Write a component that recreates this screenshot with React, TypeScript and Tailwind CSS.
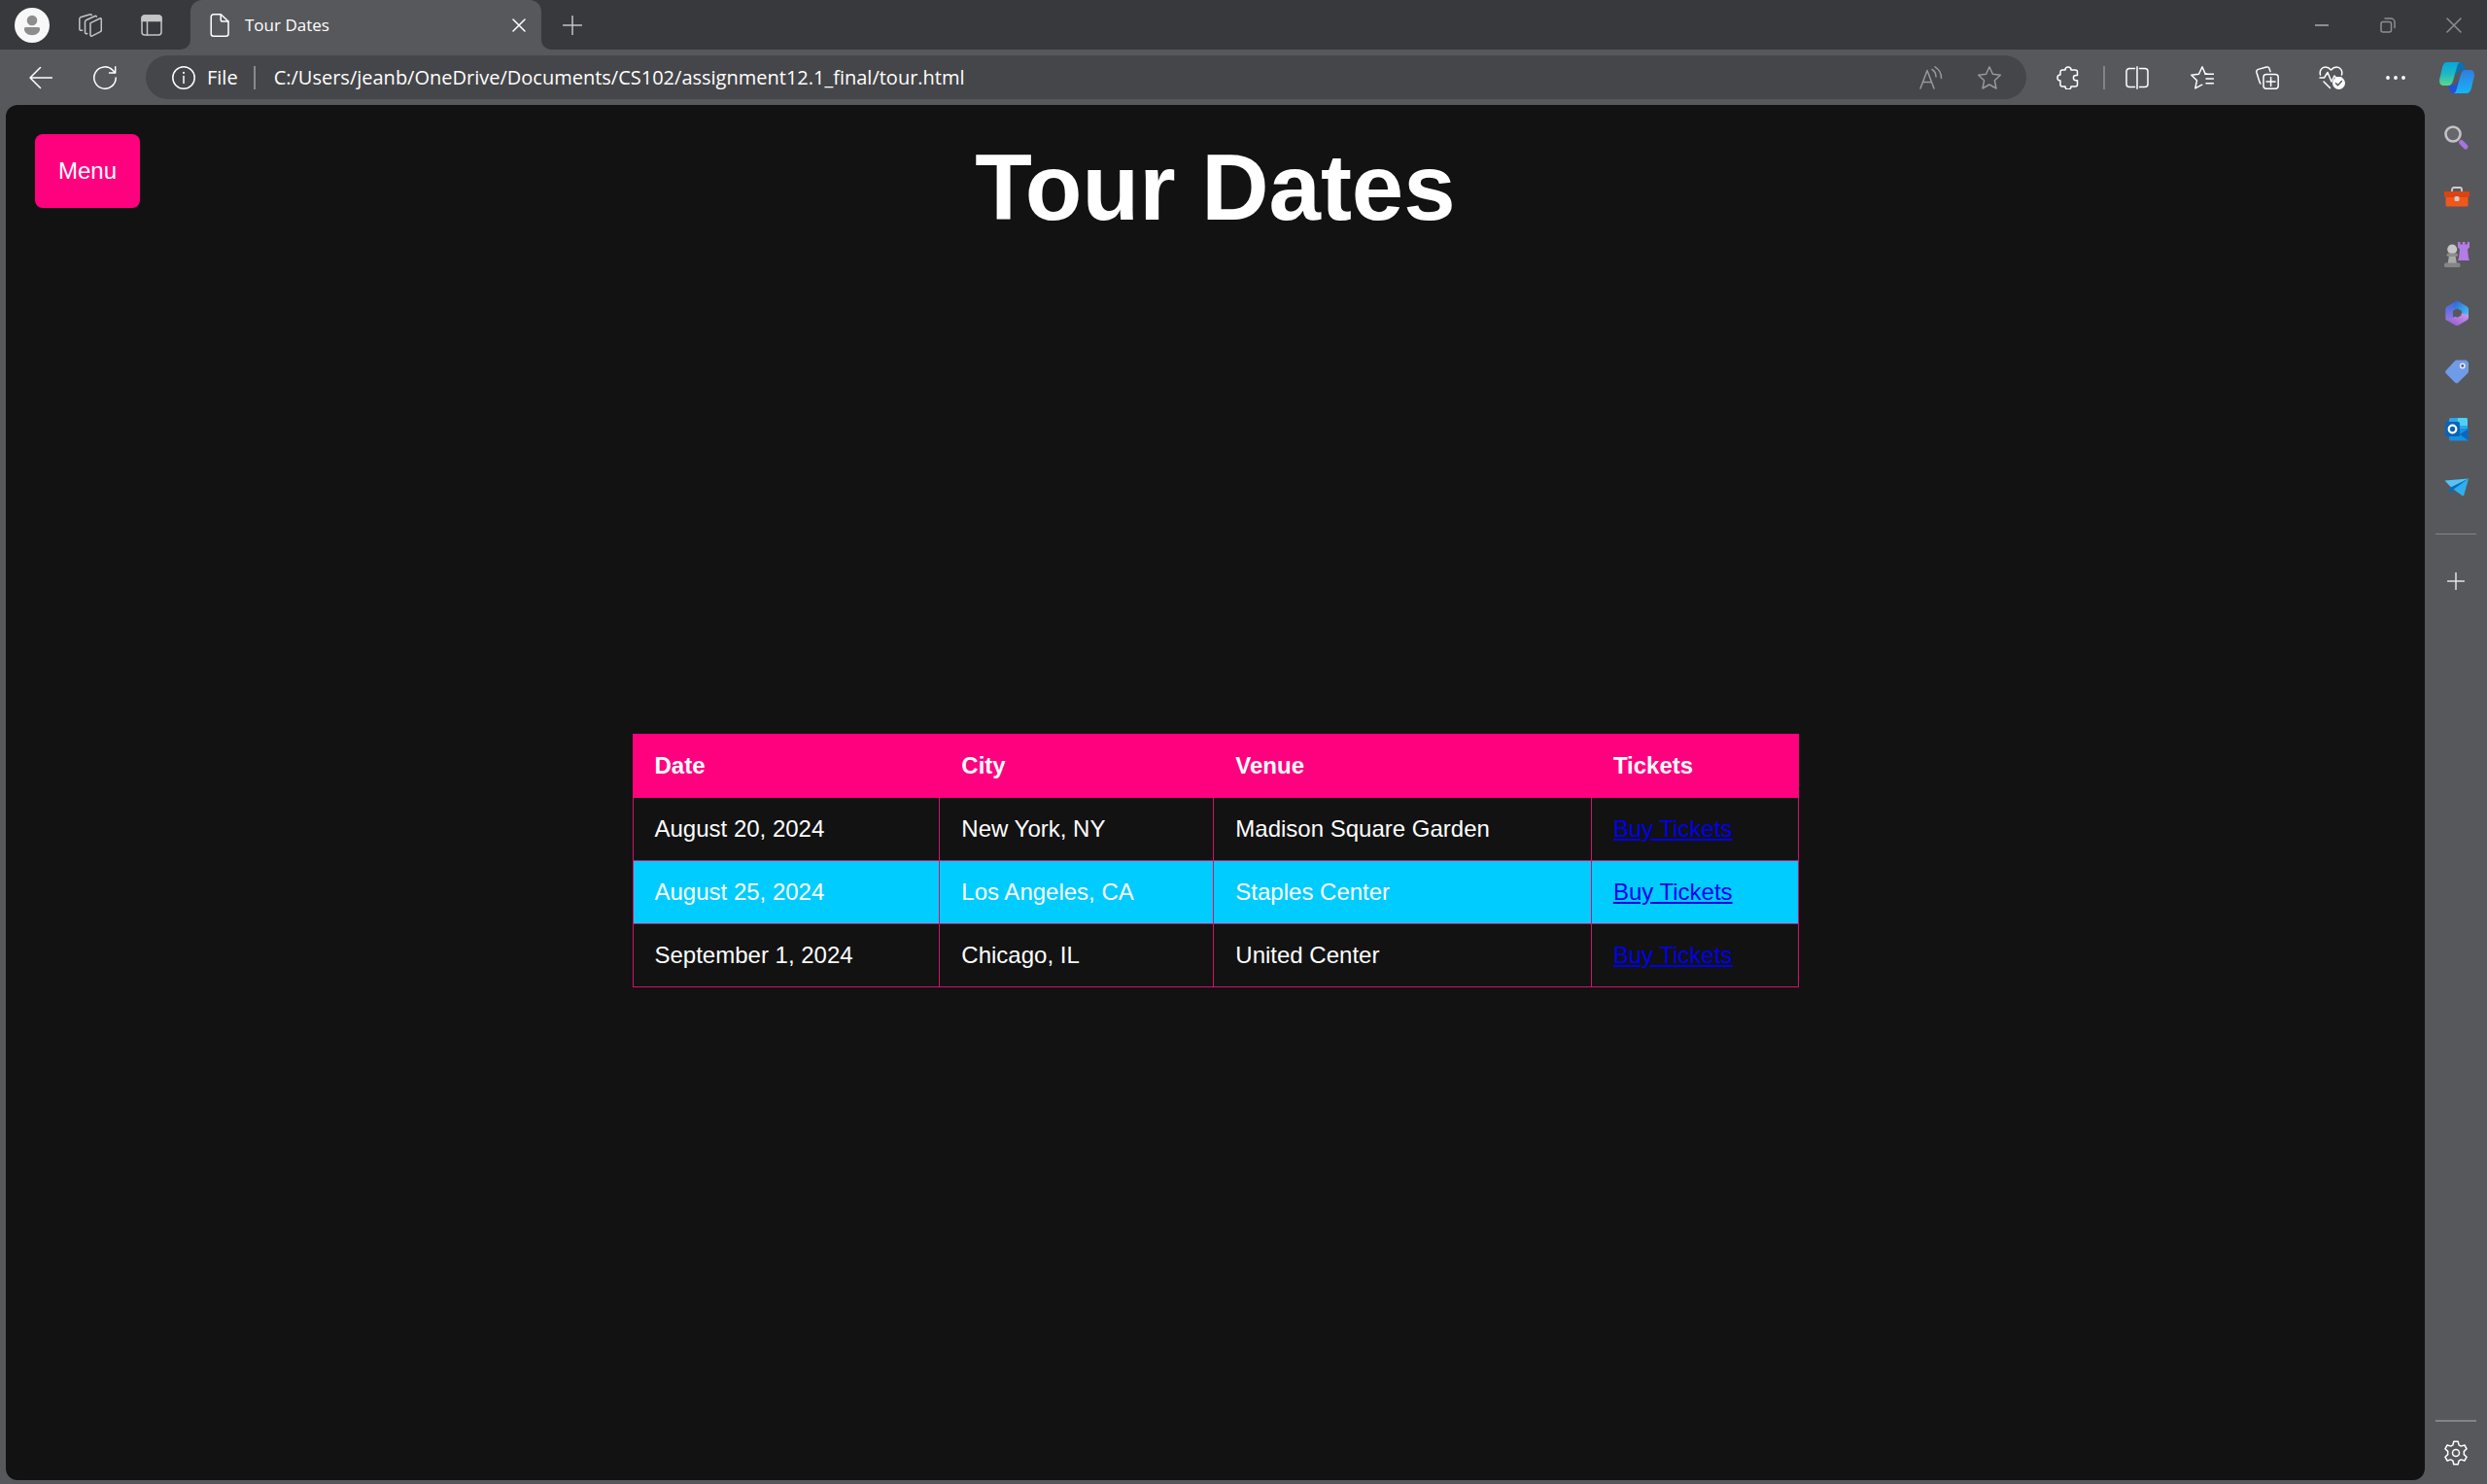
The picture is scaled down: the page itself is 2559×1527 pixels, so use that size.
import React from "react";

type IconProps = { children: React.ReactNode; className?: string; box?: string };

function Icon({ children, className = "size-6", box = "0 0 24 24" }: IconProps) {
  return (
    <svg
      viewBox={box}
      className={`shrink-0 ${className}`}
      fill="none"
      stroke="currentColor"
      strokeWidth="1.5"
      strokeLinecap="round"
      strokeLinejoin="round"
      aria-hidden="true"
    >
      {children}
    </svg>
  );
}

function IconButton({ label, className, children }: { label: string; className: string; children: React.ReactNode }) {
  return (
    <button type="button" aria-label={label} className={`flex shrink-0 items-center justify-center ${className}`}>
      {children}
    </button>
  );
}

function TabStrip() {
  return (
    <header className="flex h-[51px] shrink-0 bg-[#38393d] text-[#c4c4c7]">
      <IconButton label="Profile" className="w-[66px]">
        <svg viewBox="0 0 36 36" className="size-9" aria-hidden="true">
          <circle cx="18" cy="18" r="18" fill="#f8f8f8" />
          <circle cx="18" cy="13" r="5.3" fill="#8d8d8d" />
          <path d="M11.5 20h13a1.6 1.6 0 0 1 1.6 1.600c0 4-3.600 6.700-8.100 6.700s-8.100-2.700-8.100-6.700a1.600 1.600 0 0 1 1.600-1.600Z" fill="#8d8d8d" />
        </svg>
      </IconButton>
      <IconButton label="Workspaces" className="w-[54px]">
        <Icon>
          <path d="M12.200 9.600 21.800 5a1 1 0 0 1 1.500.9v11.200c0 .7-.4 1.300-1 1.600l-8.800 4.400a1 1 0 0 1-1.500-.9V11.300c0-.7-.3-1.400.2-1.700Z" />
          <path d="M8.800 20.500c-1.300.4-2.300 0-2.300-1.100V8.400c0-.7.4-1.300 1-1.600l9.300-4.300c.6-.3 1.400 0 1.500.7" />
          <path d="M3.600 17.200C2 17.600.8 17.200.8 16.100V5.400c0-.7.4-1.300 1-1.600L11 1c.8-.3 1.800-.2 2.300.4" />
        </Icon>
      </IconButton>
      <IconButton label="Tab actions" className="w-[72px]">
        <Icon className="size-[22px]" box="0 0 22 22">
          <rect x="1" y="1" width="20" height="20" rx="3" />
          <path d="M1 6.500V4a3 3 0 0 1 3-3h14a3 3 0 0 1 3 3v2.500Z" fill="currentColor" />
          <path d="M6.500 7v14" />
        </Icon>
      </IconButton>
      <div className="relative ml-1 flex w-[361px] items-center rounded-t-xl bg-[#57585c] pr-4 pl-5 text-white">
        <svg viewBox="0 0 10 10" className="absolute bottom-0 -left-2.5 size-2.5" aria-hidden="true">
          <path d="M10 0v10H0A10 10 0 0 0 10 0Z" fill="#57585c" />
        </svg>
        <svg viewBox="0 0 10 10" className="absolute -right-2.5 bottom-0 size-2.5" aria-hidden="true">
          <path d="M0 0v10h10A10 10 0 0 1 0 0Z" fill="#57585c" />
        </svg>
        <Icon className="h-6 w-5" box="0 0 20 24">
          <path d="M3.700.8h7.500L19 8v12.700a2.500 2.500 0 0 1-2.500 2.500H3.700a2.500 2.500 0 0 1-2.500-2.500V3.300A2.500 2.500 0 0 1 3.700.8Z" />
          <path d="M11.200 1v5.200A1.800 1.800 0 0 0 13 8h5.800" />
        </Icon>
        <span className="ml-4 flex-1 font-['Open_Sans',sans-serif] text-[17px] leading-6">Tour Dates</span>
        <IconButton label="Close tab" className="">
          <Icon className="size-3.5" box="0 0 14 14">
            <path d="m1 1 12 12M13 1 1 13" />
          </Icon>
        </IconButton>
      </div>
      <IconButton label="New tab" className="w-16">
        <Icon className="size-5" box="0 0 20 20">
          <path d="M10 .5v19M.5 10h19" />
        </Icon>
      </IconButton>
      <div className="ml-auto flex text-[#8e8e91]">
        <IconButton label="Minimize" className="w-[68px]">
          <Icon className="size-4" box="0 0 16 16">
            <path d="M1 8h14" strokeWidth="2" strokeLinecap="butt" />
          </Icon>
        </IconButton>
        <IconButton label="Restore" className="w-[68px]">
          <Icon className="size-4" box="0 0 16 16">
            <rect x="1" y="4.500" width="10.500" height="10.500" rx="2" />
            <path d="M5 1h6a4 4 0 0 1 4 4v5.500" />
          </Icon>
        </IconButton>
        <IconButton label="Close" className="w-[68px]">
          <Icon className="size-4" box="0 0 16 16">
            <path d="m1 1 14 14M15 1 1 15" />
          </Icon>
        </IconButton>
      </div>
    </header>
  );
}

function CopilotLogo() {
  return (
    <svg viewBox="0 0 36 32" className="h-8 w-9" aria-hidden="true">
      <defs>
        <linearGradient id="cp-left" x1="0" y1="0" x2="0" y2="1">
          <stop offset="0" stopColor="#0aa5dc" />
          <stop offset="0.5" stopColor="#1db8c4" />
          <stop offset="1" stopColor="#5bd98b" />
        </linearGradient>
        <linearGradient id="cp-right" x1="0" y1="0" x2="0" y2="1">
          <stop offset="0" stopColor="#2f7de0" />
          <stop offset="1" stopColor="#18b4f5" />
        </linearGradient>
      </defs>
      <path d="M20 0c4 0 5 2 6 5l1 3.500h-4c-3 0-4 2-5 5L14 8l2-8Z" fill="#0e6fb0" />
      <path d="M16 32c-4 0-5-2-6-5l-1-3.500h4c3 0 4-2 5-5l5 5.500-3 8Z" fill="#2350d8" />
      <path d="M8 0h14c-2 0-3 1.500-3.800 4.500l-4 14C13.200 22 12 24 9 24H4.500C.8 24-.5 21 .3 17L3 5.500C4 1.500 5.500 0 8 0Z" fill="url(#cp-left)" />
      <path d="M28 32H14c2 0 3-1.500 3.800-4.500l4-14C22.800 10 24 8 27 8h4.500c3.700 0 5 3 4.200 7L33 26.500c-1 4-2.500 5.500-5 5.500Z" fill="url(#cp-right)" />
      <path d="m19.500 10.500-4.500 13h2.500l4-12.500Z" fill="#57585c" />
    </svg>
  );
}

function Toolbar() {
  return (
    <nav aria-label="Browser toolbar" className="flex h-[57px] shrink-0 items-center text-white">
      <IconButton label="Back" className="ml-2 h-12 w-[68px]">
        <Icon>
          <path d="M23.500 12H1M11.500 1.500 1 12l10.500 10.500" />
        </Icon>
      </IconButton>
      <IconButton label="Refresh" className="h-12 w-16">
        <Icon>
          <path d="M23.200 12A11.200 11.200 0 1 1 20 4.200L22.500 7M22.700.8V7h-6.200" />
        </Icon>
      </IconButton>
      <div className="ml-2.5 flex h-[45px] flex-1 items-center rounded-full bg-[#454649] pl-[27px] font-['Open_Sans',sans-serif] text-[20px]">
        <Icon>
          <circle cx="12" cy="12" r="11.200" />
          <path d="M12 10.500v7" />
          <path d="M12 6.800v.2" strokeWidth="2" />
        </Icon>
        <label htmlFor="address" className="ml-3 leading-7">
          File
        </label>
        <span className="ml-4 h-6 w-0.5 bg-[#8a8b8e]" />
        <input
          id="address"
          type="text"
          defaultValue="C:/Users/jeanb/OneDrive/Documents/CS102/assignment12.1_final/tour.html"
          className="ml-[19px] h-9 flex-1 bg-transparent leading-7 outline-none"
        />
        <IconButton label="Read aloud" className="h-10 w-[60px] text-[#98999b]">
          <Icon>
            <path d="m1 23 7-18.500L15 23M3.500 16.500h9" />
            <path d="M13 3.500c2.500 1.500 4 4 4 7.500M16 .8c4 2.200 6.500 6.500 6.500 11.700" />
          </Icon>
        </IconButton>
        <IconButton label="Add to favorites" className="mr-2 h-10 w-[60px] text-[#98999b]">
          <Icon>
            <path d="m12 .8 3.400 7.400 7.900 1-5.900 5.600 1.600 8.200-7-4-7 4 1.600-8.200L.7 9.200l7.900-1Z" />
          </Icon>
        </IconButton>
      </div>
      <IconButton label="Extensions" className="ml-[7px] h-12 w-[72px]">
        <Icon>
          <path d="M5.500 4H9a3 3 0 0 1 6 0h4.500a2 2 0 0 1 2 2v3.500H20a2.600 2.600 0 0 0 0 5.200h1.500V19a2 2 0 0 1-2 2H15a3 3 0 0 1-6 0H6a2 2 0 0 1-2-2v-4a3 3 0 0 1 0-6V6a2 2 0 0 1 1.500-2Z" />
        </Icon>
      </IconButton>
      <span className="h-6 w-0.5 bg-[#838488]" />
      <IconButton label="Split screen" className="h-12 w-[66px]">
        <Icon>
          <path d="M8 2.500H4a3 3 0 0 0-3 3v13a3 3 0 0 0 3 3h4M16 2.500h4a3 3 0 0 1 3 3v13a3 3 0 0 1-3 3h-4M12 .8v22.400M8 2.500h1.500v19H8M16 2.500h-1.500v19H16" strokeWidth="0" />
          <path d="M9.500 2.500H4a3 3 0 0 0-3 3v13a3 3 0 0 0 3 3h5.500M14.500 2.500H20a3 3 0 0 1 3 3v13a3 3 0 0 1-3 3h-5.500M12 .8v22.400" />
        </Icon>
      </IconButton>
      <IconButton label="Favorites" className="h-12 w-[67px]">
        <Icon>
          <path d="M16.500 8 15 7.700 12 .8 8.500 8.200l-7.700 1 5.700 5.600-1.700 8 7-3.600" />
          <path d="M15 8.200h8.500M16 13h7.500M16 17.800h7.500" />
        </Icon>
      </IconButton>
      <IconButton label="Collections" className="h-12 w-[67px]">
        <Icon>
          <rect x="8" y="8.500" width="15.200" height="14.800" rx="3" />
          <path d="M15.600 11.500v9M11.100 16h9" />
          <path d="M5 18c-.5-.5-.8-1-1-1.700L.9 6.500a2.500 2.500 0 0 1 1.700-3.100L11 1a2.500 2.500 0 0 1 3.100 1.700l.9 2.800" />
        </Icon>
      </IconButton>
      <IconButton label="Browser essentials" className="h-12 w-[67px]">
        <Icon className="h-6 w-7" box="0 0 28 24">
          <path d="M1.500 9C.3 4.500 3 1 6.800 1c2.500 0 4.200 1.200 5.700 3 1.500-1.800 3.200-3 5.700-3 3.800 0 6.500 3.500 5.300 8" />
          <path d="M1 12h4.500L9 6.500l4 9.500 3-6 1.500 2H23M5 16l6.500 6.500" />
          <circle cx="20.500" cy="17.500" r="6.500" fill="currentColor" stroke="none" />
          <path d="m17.500 17.700 2 2 4-4.200" stroke="#57585c" />
        </Icon>
      </IconButton>
      <IconButton label="Settings and more" className="h-12 w-[64px]">
        <svg viewBox="0 0 20 4" className="h-1 w-5" fill="currentColor" aria-hidden="true">
          <circle cx="2" cy="2" r="1.900" />
          <circle cx="10" cy="2" r="1.900" />
          <circle cx="18" cy="2" r="1.900" />
        </svg>
      </IconButton>
      <IconButton label="Copilot" className="h-12 w-[62px]">
        <CopilotLogo />
      </IconButton>
    </nav>
  );
}

const sidebarApps: { label: string; art: React.ReactNode }[] = [
  {
    label: "Search",
    art: (
      <>
        <path d="m17.500 17.500 4.500 4.500" stroke="#a873dc" strokeWidth="5" strokeLinecap="round" />
        <circle cx="9" cy="9" r="7.500" fill="#66676c" stroke="#c3c3c3" strokeWidth="2.600" />
      </>
    ),
  },
  {
    label: "Tools",
    art: (
      <>
        <path d="M8 8V6a2 2 0 0 1 2-2h6a2 2 0 0 1 2 2v2" fill="none" stroke="#d0d0d0" strokeWidth="1.800" />
        <path d="M1.500 13h23v9a1.500 1.500 0 0 1-1.500 1.500H3A1.500 1.500 0 0 1 1.500 22Z" fill="#f0571a" />
        <path d="M1 8h24a1 1 0 0 1 1 1v3a2 2 0 0 1-2 2H2a2 2 0 0 1-2-2V9a1 1 0 0 1 1-1Z" fill="#dd4311" />
        <rect x="10.500" y="13" width="5" height="5" rx="1.500" fill="#cfcac8" />
      </>
    ),
  },
  {
    label: "Games",
    art: (
      <>
        <path d="M14 0h2.500v2.500h2.300V0h2.700v2.500h2.300V0H26v5.500l-2 2 1 9 1 2.500H14l1-2.500 1-9-2-2Z" fill="#b57be6" />
        <path d="M5 14h6.500l1.500 9H3.500Z" fill="#a9a9a9" />
        <circle cx="8.200" cy="7.500" r="5" fill="#c6c6c6" />
        <rect x="2.500" y="11.500" width="11.500" height="3.500" rx="1.700" fill="#8c8c8c" />
        <rect x="0" y="21.500" width="16.500" height="4.500" rx="1.500" fill="#858585" />
      </>
    ),
  },
  {
    label: "Microsoft 365",
    art: (
      <>
        <defs>
          <linearGradient id="m-left" x1="0" y1="0" x2="0" y2="1">
            <stop offset="0" stopColor="#3f68dd" />
            <stop offset="1" stopColor="#8f78e6" />
          </linearGradient>
          <linearGradient id="m-base" x1="0" y1="1" x2="1" y2="0">
            <stop offset="0" stopColor="#8f52cf" />
            <stop offset="1" stopColor="#d09bf0" />
          </linearGradient>
          <linearGradient id="m-right" x1="0" y1="0" x2="1" y2="1">
            <stop offset="0" stopColor="#2a5fd0" />
            <stop offset="1" stopColor="#4ccbf5" />
          </linearGradient>
        </defs>
        <path d="M13 .6 3 6.200A3.500 3.500 0 0 0 1.300 9v9.500c0 1.800 1.500 3 3.500 2.200L9 18v-7l7-4.500Z" fill="url(#m-left)" />
        <path d="M10.500 1.500c1.700-1.100 3.300-1.100 5 0l7.800 4.700A3.500 3.500 0 0 1 25 9v9L18 16v-5l-9-3Z" fill="url(#m-right)" />
        <path d="m2.500 20.500 6-2.500 9-4.500L25 15v2.500c0 1.300-.7 2.300-1.700 3l-7.800 4.700c-1.700 1-3.300 1-5 0Z" fill="url(#m-base)" />
        <path d="m13.500 8.500 4 2.300v4.700l-4 2.300-4-2.300v-4.700Z" fill="#57585c" />
      </>
    ),
  },
  {
    label: "Shopping",
    art: (
      <>
        <path d="M13 1.500h9.500L25 4v9c0 .8-.3 1.500-.8 2L14.500 24.500a2.500 2.500 0 0 1-3.500 0l-9-9a2.500 2.500 0 0 1 0-3.500L11 2.300c.6-.5 1.300-.8 2-.8Z" fill="#6f9be8" />
        <circle cx="18.800" cy="7.500" r="2.200" fill="#4c5d85" stroke="#e8edf8" strokeWidth="1.500" />
      </>
    ),
  },
  {
    label: "Outlook",
    art: (
      <>
        <rect x="5" y="1" width="19" height="17" rx="1.500" fill="#28a8ea" />
        <path d="M14 1h8.500A1.500 1.500 0 0 1 24 2.500V9H14Z" fill="#50d0f8" />
        <path d="M5 12h20v11a1.500 1.500 0 0 1-1.500 1.500H6.500A1.500 1.500 0 0 1 5 23Z" fill="#1490df" />
        <path d="m25 12-9 6 9 6.500Z" fill="#0f67b5" />
        <rect x="1" y="5" width="15" height="15" rx="1.500" fill="#0a63b8" />
        <circle cx="8.500" cy="12.500" r="3.800" fill="none" stroke="#fff" strokeWidth="2.200" />
      </>
    ),
  },
  {
    label: "Drop",
    art: (
      <>
        <path d="m.5 5.500 24.500-2L9 14.500Z" fill="#55c4f5" />
        <path d="M25 3.500 6.500 12.500l-2 5.500 7-2Z" fill="#0c6bb5" />
        <path d="M25 3.500 9.500 14.500l9 6.500c.8.600 1.500.3 1.800-.5Z" fill="#2fb0ee" />
      </>
    ),
  },
];

function Sidebar() {
  return (
    <aside aria-label="Sidebar" className="flex w-16 shrink-0 flex-col items-center text-white">
      <div className="flex w-full flex-col items-center pt-1">
        {sidebarApps.map((app) => (
          <IconButton key={app.label} label={app.label} className="h-[60px] w-full pl-0.5">
            <svg viewBox="0 0 26 26" className="size-[26px]" aria-hidden="true">
              {app.art}
            </svg>
          </IconButton>
        ))}
      </div>
      <span className="mt-[17px] h-px w-[42px] bg-[#838488]" />
      <IconButton label="Customize" className="mt-[18px] h-[60px] w-full">
        <Icon className="size-[18px]" box="0 0 18 18">
          <path d="M9 .5v17M.5 9h17" stroke="#e3e3e3" />
        </Icon>
      </IconButton>
      <span className="mt-auto h-0.5 w-[42px] bg-[#838488]" />
      <IconButton label="Settings" className="h-16 w-full">
        <Icon className="size-[26px]" box="0 0 26 26">
          <circle cx="13" cy="13" r="3.500" />
          <path d="M10.800 1.200h4.400l.9 3.700 2.100 1.200 3.700-1.100 2.200 3.800-2.800 2.600v3.200l2.800 2.600-2.200 3.800-3.700-1.100-2.100 1.200-.9 3.700h-4.400l-.9-3.700-2.100-1.200L4.100 21l-2.200-3.800 2.800-2.600v-3.200L1.900 8.800 4.100 5l3.700 1.100 2.100-1.200Z" />
        </Icon>
      </IconButton>
    </aside>
  );
}

const tourDates = [
  { date: "August 20, 2024", city: "New York, NY", venue: "Madison Square Garden" },
  { date: "August 25, 2024", city: "Los Angeles, CA", venue: "Staples Center" },
  { date: "September 1, 2024", city: "Chicago, IL", venue: "United Center" },
];

function TourPage() {
  return (
    <main className="mb-1 ml-1.5 flex flex-1 flex-col rounded-xl bg-[#121212] font-['Liberation_Sans',Arial,sans-serif] text-[24px] leading-7 text-white">
      <div className="grid grid-cols-[1fr_auto_1fr] items-start px-[30px] pt-[30px]">
        <button type="button" className="justify-self-start rounded-lg bg-[#ff007f] p-6">
          Menu
        </button>
        <h1 className="text-8xl leading-[110px] font-bold">Tour Dates</h1>
      </div>
      <div className="flex flex-1 items-center justify-center">
        <table className="w-4/5 max-w-[1200px] border-collapse text-left">
          <thead>
            <tr className="bg-[#ff007f]">
              {["Date", "City", "Venue", "Tickets"].map((name) => (
                <th key={name} scope="col" className="border border-[#ff007f] px-[22px] py-[18px] font-bold">
                  {name}
                </th>
              ))}
            </tr>
          </thead>
          <tbody>
            {tourDates.map((show) => (
              <tr key={show.date} className="even:bg-[#00ccff]">
                <td className="border border-[#d1126d] px-[22px] py-[18px]">{show.date}</td>
                <td className="border border-[#d1126d] px-[22px] py-[18px]">{show.city}</td>
                <td className="border border-[#d1126d] px-[22px] py-[18px]">{show.venue}</td>
                <td className="border border-[#d1126d] px-[22px] py-[18px]">
                  <a href="#tickets" className="text-[#0000ee] underline">
                    Buy Tickets
                  </a>
                </td>
              </tr>
            ))}
          </tbody>
        </table>
      </div>
    </main>
  );
}

export default function App() {
  return (
    <div className="flex min-h-screen flex-col bg-[#57585c]">
      <TabStrip />
      <Toolbar />
      <div className="flex flex-1">
        <TourPage />
        <Sidebar />
      </div>
    </div>
  );
}
